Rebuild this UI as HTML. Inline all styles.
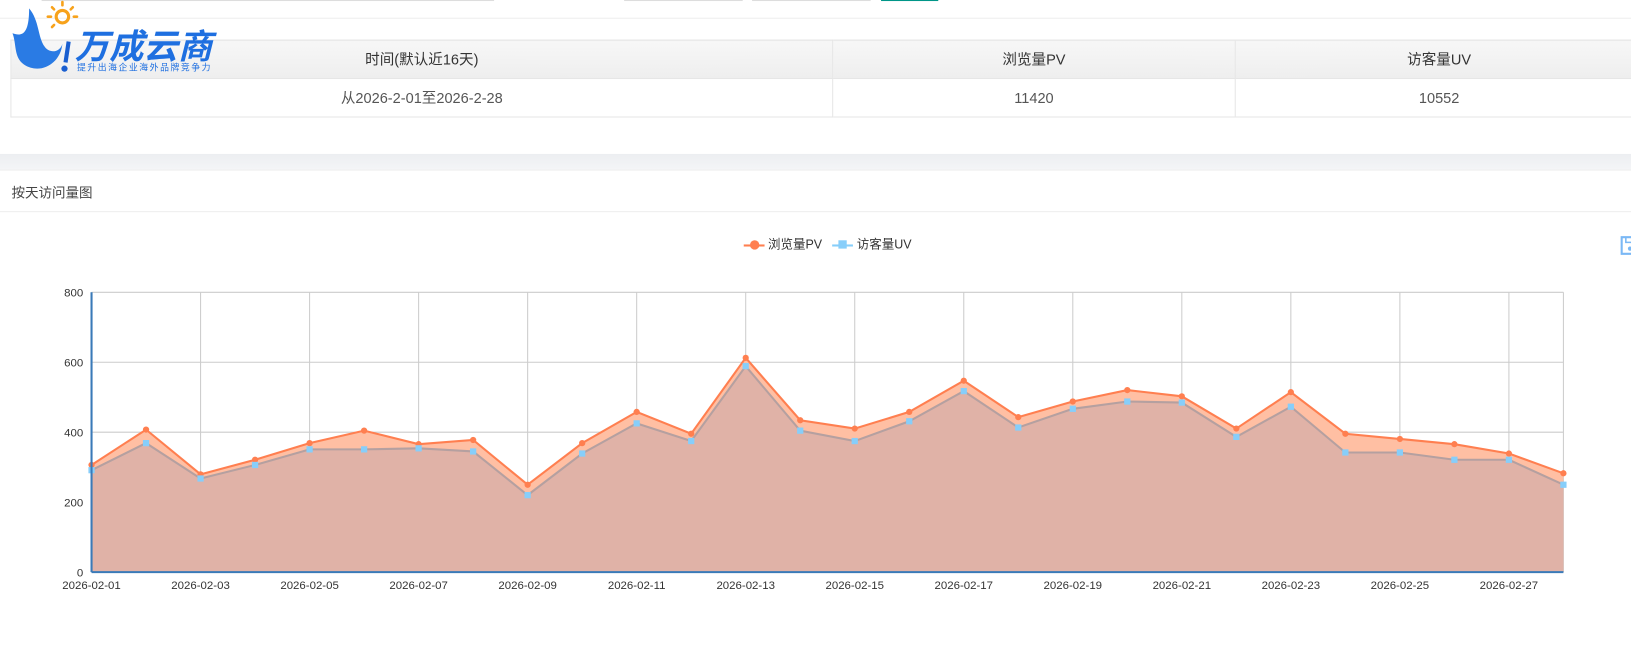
<!DOCTYPE html>
<html><head><meta charset="utf-8">
<style>
html,body{margin:0;width:1631px;height:644px;overflow:hidden;background:#fff}
#w{position:absolute;left:0;top:0;width:1568px;height:620px;transform:scale(1.0402);transform-origin:0 0;font-family:"Liberation Sans","Noto Sans CJK SC",sans-serif}
.abs{position:absolute}
table{border-collapse:collapse;position:absolute;left:10px;top:38px;width:1570px;font-size:14px;color:#333}
td{border:1px solid #e6e6e6;text-align:center;height:36px;padding:0}
tr.h td{background:linear-gradient(#f7f7f7,#eeeeee)}
tr.r td{color:#555}
</style></head><body><div id="w">
<div class="abs" style="left:40px;top:-1px;width:435px;height:2px;background:#ddd"></div>
<div class="abs" style="left:600px;top:-1px;width:114px;height:2px;background:#ddd"></div>
<div class="abs" style="left:723px;top:-1px;width:114px;height:2px;background:#ddd"></div>
<div class="abs" style="left:847px;top:-1px;width:55px;height:2px;background:#009688"></div>
<div class="abs" style="left:0;top:17px;width:1631px;height:1px;background:#eee"></div>
<table>
<tr class="h"><td style="width:789px">时间(默认近16天)</td><td style="width:386px">浏览量PV</td><td>访客量UV</td></tr>
<tr class="r"><td>从2026-2-01至2026-2-28</td><td>11420</td><td>10552</td></tr>
</table>
<svg class="abs" style="left:8px;top:0" width="205" height="75" viewBox="0 0 205 75">
<circle cx="52" cy="16" r="6" fill="none" stroke="#f7a21b" stroke-width="3"/>
<g stroke="#f7a21b" stroke-width="2.5" stroke-linecap="round"><line x1="52" y1="2" x2="52" y2="5"/><line x1="42" y1="7" x2="44" y2="9"/><line x1="62" y1="7" x2="60" y2="9"/><line x1="38" y1="16" x2="41" y2="16"/><line x1="66" y1="16" x2="63" y2="16"/><line x1="44" y1="24" x2="42" y2="26"/></g>
<path d="M20 8 C30 20 28 35 35 45 C40 52 50 50 52 42 C50 62 30 72 15 62 C5 55 8 42 4 32 C15 36 20 30 20 8Z" fill="#2a7be4"/>
<path d="M58 40 L55 60" stroke="#1a5fd0" stroke-width="4"/><circle cx="54" cy="66" r="3" fill="#1a5fd0"/>
<text x="64" y="56" font-size="33" font-weight="bold" fill="#1e6fe0" font-family="Noto Sans CJK SC,sans-serif" font-style="italic">万成云商</text>
<text x="66" y="68" font-size="8.5" fill="#1e6fe0" font-family="Noto Sans CJK SC,sans-serif" letter-spacing="1.5">提升出海企业海外品牌竞争力</text>
</svg>
<div class="abs" style="left:0;top:148px;width:1631px;height:15px;background:linear-gradient(#eceef1,#f4f5f7);border-bottom:1px solid #eee"></div>
<div class="abs" style="left:11px;top:175px;font-size:13px;color:#444">按天访问量图</div>
<div class="abs" style="left:0;top:203px;width:1631px;height:1px;background:#eee"></div>
<div class="abs" style="left:715px;top:226px;font-size:12px;color:#333;white-space:nowrap">
<span style="display:inline-block;width:20px;height:2px;background:#ff7f50;vertical-align:middle;position:relative"><span style="position:absolute;left:6px;top:-4px;width:9px;height:9px;border-radius:50%;background:#ff7f50"></span></span> 浏览量PV &nbsp;
<span style="display:inline-block;width:20px;height:2px;background:#87cefa;vertical-align:middle;position:relative"><span style="position:absolute;left:6px;top:-4px;width:8px;height:8px;background:#87cefa"></span></span> 访客量UV</div>
<svg class="abs" style="left:1557px;top:226px" width="20" height="20"><path d="M2 2h13l3 3v13H2z" fill="none" stroke="#7ab8f5" stroke-width="2"/><circle cx="10" cy="13" r="2" fill="#7ab8f5"/><path d="M6 2v5h7V2" fill="none" stroke="#7ab8f5" stroke-width="1.5"/></svg>
<svg id="ch" class="abs" style="left:0;top:0" width="1631" height="644"></svg>
</div>
<script>
var pv=[447,413,456,442,426,414,427,423,466,426,396,417,344,404,412,396,366,401,386,375,381,412,377,417,422,427,436,455];
var uv=[452,426,460,447,432,432,431,434,476,436,407,424,352,414,424,405,376,411,393,386,387,420,391,435,435,442,442,466];
var x0=88,x1=1503,y0=550,yt=281,st=(x1-x0)/27,s='';
function X(i){return x0+i*st}
for(var k=0;k<=4;k++){var y=y0-(y0-yt)*k/4;s+='<line x1="'+x0+'" x2="'+x1+'" y1="'+y+'" y2="'+y+'" stroke="#ccc"/>';s+='<text x="80" y="'+(y+4)+'" font-size="11" text-anchor="end" fill="#333">'+(k*200)+'</text>';}
for(var i=0;i<28;i+=2){s+='<line x1="'+X(i)+'" x2="'+X(i)+'" y1="'+yt+'" y2="'+y0+'" stroke="#ccc"/>';s+='<text x="'+X(i)+'" y="566" font-size="11" text-anchor="middle" fill="#333">2026-02-'+('0'+(i+1)).slice(-2)+'</text>';}
s+='<line x1="'+x1+'" x2="'+x1+'" y1="'+yt+'" y2="'+y0+'" stroke="#ccc"/>';
function pts(a){return a.map(function(v,i){return X(i)+','+v}).join(' ')}
s+='<polygon points="'+x0+','+y0+' '+pts(pv)+' '+x1+','+y0+'" fill="#ffbfa3"/>';
s+='<polygon points="'+x0+','+y0+' '+pts(uv)+' '+x1+','+y0+'" fill="#e0b2a7"/>';
s+='<polyline points="'+pts(uv)+'" fill="none" stroke="#b5a0a0" stroke-width="2"/>';
s+='<polyline points="'+pts(pv)+'" fill="none" stroke="#ff7f50" stroke-width="2"/>';
for(var i=0;i<28;i++){s+='<circle cx="'+X(i)+'" cy="'+pv[i]+'" r="3" fill="#ff7f50"/>';s+='<rect x="'+(X(i)-3)+'" y="'+(uv[i]-3)+'" width="6" height="6" fill="#87cefa"/>';}
s+='<line x1="'+x0+'" x2="'+x0+'" y1="'+yt+'" y2="'+y0+'" stroke="#3a7ab8" stroke-width="2"/>';
s+='<line x1="'+x0+'" x2="'+x1+'" y1="'+y0+'" y2="'+y0+'" stroke="#3a7ab8" stroke-width="2"/>';
document.getElementById('ch').innerHTML=s;
</script>
</body></html>
